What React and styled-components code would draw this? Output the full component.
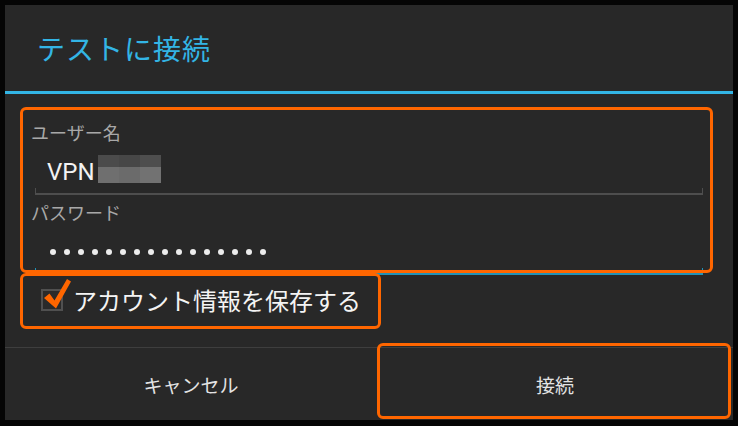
import React from "react";
import styled, { createGlobalStyle } from "styled-components";

const Global = createGlobalStyle`
  html, body { margin: 0; padding: 0; background: #050505; }
  body { font-family: "Noto Sans CJK JP", "Noto Sans", sans-serif; }
  * { box-sizing: border-box; }
`;

const ORANGE = "#ff6600";

const Page = styled.div`
  width: 738px;
  height: 426px;
  padding: 5px;
  background: #050505;
`;

const Dialog = styled.div`
  position: relative;
  width: 728px;
  height: 415px;
  background: #282828;
  display: flex;
  flex-direction: column;
`;

const Title = styled.div`
  height: 86px;
  padding-left: 32px;
  display: flex;
  align-items: center;
  color: #33b5e5;
  font-size: 28px;
  letter-spacing: 1px;
`;

const TitleRule = styled.div`
  height: 3px;
  background: #33b5e5;
`;

const Highlight = styled.div`
  position: absolute;
  top: ${(p) => p.$t}px;
  bottom: ${(p) => p.$b}px;
  left: ${(p) => p.$l}px;
  right: ${(p) => p.$r ?? "auto"}${(p) => (p.$r != null ? "px" : "")};
  width: ${(p) => (p.$w ? `${p.$w}px` : "auto")};
  border: 3px solid ${ORANGE};
  border-radius: 6px;
  pointer-events: none;
`;

const FieldGroup = styled.div`
  position: relative;
  padding: 28px 30px 0 26px;
`;

const Label = styled.div`
  height: 20px;
  margin-top: ${(p) => p.$mt}px;
  font-size: 18px;
  line-height: 20px;
  color: #a8a8a8;
`;

const Input = styled.div`
  position: relative;
  height: 53px;
  margin-left: 4px;
  padding-left: ${(p) => p.$pl}px;
  padding-top: ${(p) => p.$pt}px;
  display: flex;
  align-items: flex-start;
  &::after {
    content: "";
    position: absolute;
    left: 0;
    right: 0;
    bottom: 0;
    height: 5px;
    border: 0 solid ${(p) => (p.$focused ? "#2192b8" : "#4e4e4e")};
    border-width: 0 1px 2px 1px;
  }
`;

const Value = styled.span`
  font-family: Roboto, "Noto Sans CJK JP", sans-serif;
  font-size: 24px;
  line-height: 28px;
  color: #f2f2f2;
  padding-top: 3px;
`;

const Redacted = styled.div`
  display: grid;
  grid-template-columns: repeat(3, 21px);
  grid-template-rows: 12px 16px;
  margin-left: 3px;
`;

const Cell = styled.div`
  background: ${(p) => p.$c};
`;

const Dots = styled.div`
  display: flex;
  gap: 8px;
`;

const Dot = styled.span`
  width: 6px;
  height: 6px;
  border-radius: 50%;
  background: #ececec;
`;

const CheckRow = styled.div`
  position: relative;
  height: 48px;
  padding-left: 36px;
  display: flex;
  align-items: center;
  gap: 10px;
  color: #f4f4f4;
  font-size: 24px;
`;

const Box = styled.span`
  position: relative;
  width: 22px;
  height: 22px;
  border: 2px solid #505050;
  background: #2a2a2a;
  margin-top: 1px;
`;

const Mark = styled.svg`
  position: absolute;
  left: 0px;
  top: -13px;
  width: 30px;
  height: 32px;
`;

const Spacer = styled.div`
  flex: 1;
`;

const Rule = styled.div`
  height: 1px;
  background: #3e3e3e;
`;

const ButtonBar = styled.div`
  height: 72px;
  display: grid;
  grid-template-columns: 1fr 1fr;
`;

const Button = styled.div`
  position: relative;
  display: flex;
  align-items: center;
  justify-content: center;
  padding-left: 8px;
  color: #e4e4e4;
  font-size: 19px;
`;

const cellsTop = ["#4b4b4b", "#474747", "#4e4e4e"];
const cellsBottom = ["#6f6f6f", "#6b6b6b", "#727272"];

export default function App() {
  return (
    <>
      <Global />
      <Page>
        <Dialog>
          <Title>テストに接続</Title>
          <TitleRule />
          <FieldGroup>
            <Label $mt={0}>ユーザー名</Label>
            <Input $pl={12} $pt={13}>
              <Value>VPN</Value>
              <Redacted>
                {cellsTop.map((c, i) => (
                  <Cell key={"t" + i} $c={c} />
                ))}
                {cellsBottom.map((c, i) => (
                  <Cell key={"b" + i} $c={c} />
                ))}
              </Redacted>
            </Input>
            <Label $mt={7}>パスワード</Label>
            <Input $pl={15} $pt={27} $focused>
              <Dots>
                {Array.from({ length: 16 }).map((_, i) => (
                  <Dot key={i} />
                ))}
              </Dots>
            </Input>
            <Highlight $t={13} $b={2} $l={15} $r={20} />
          </FieldGroup>
          <CheckRow>
            <Box>
              <Mark viewBox="0 0 30 32">
                <path
                  d="M1 20 L6.5 15.5 L11.5 22.5 L24 1 L28 3.5 L13 30.5 Z"
                  fill={ORANGE}
                />
              </Mark>
            </Box>
            アカウント情報を保存する
            <Highlight $t={-2} $b={-6} $l={15} $w={361} />
          </CheckRow>
          <Spacer />
          <Rule />
          <ButtonBar>
            <Button>キャンセル</Button>
            <Button>
              接続
              <Highlight $t={-5} $b={1} $l={8} $r={2} />
            </Button>
          </ButtonBar>
        </Dialog>
      </Page>
    </>
  );
}
